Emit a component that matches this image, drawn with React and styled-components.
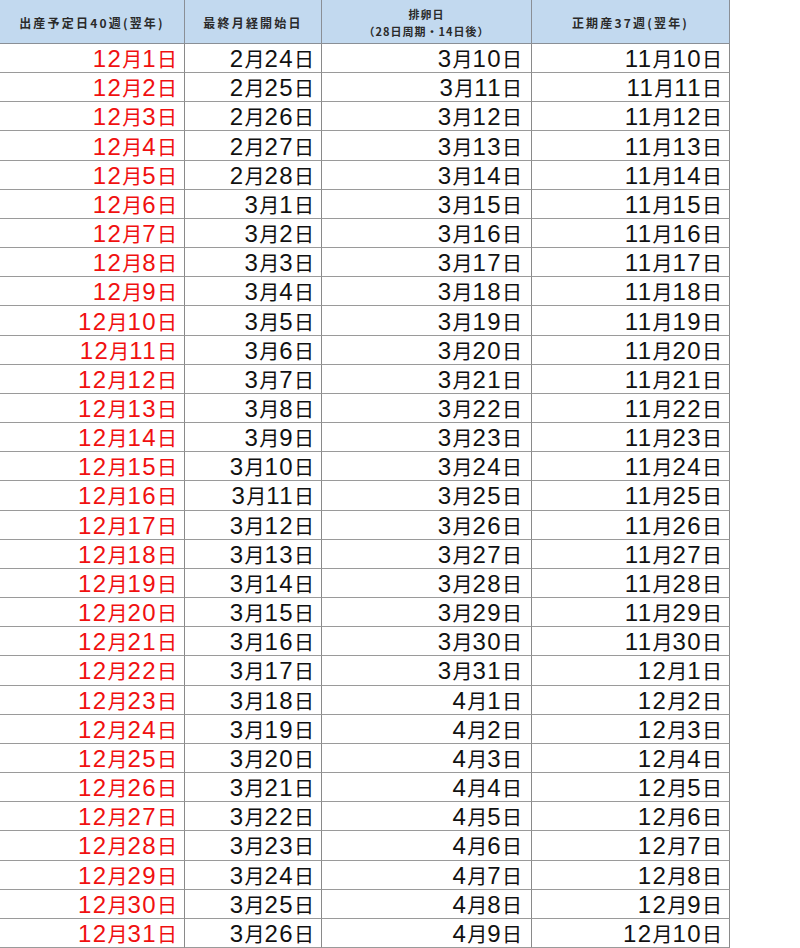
import React from 'react'
import styled, { createGlobalStyle } from 'styled-components'

const GlobalStyle = createGlobalStyle`
  html, body {
    margin: 0;
    padding: 0;
    background: #fff;
  }
  * { box-sizing: border-box; }
`

const DAY = 24 * 60 * 60 * 1000
const base = Date.UTC(2023, 1, 24)

const md = (t) => {
  const d = new Date(t)
  return [d.getUTCMonth() + 1, d.getUTCDate()]
}

const rows = Array.from({ length: 31 }, (_, i) => {
  const lmp = base + i * DAY
  return {
    due: md(lmp + 280 * DAY),
    lmp: md(lmp),
    ovu: md(lmp + 14 * DAY),
    term: md(lmp + 259 * DAY),
  }
})

function DateText({ value }) {
  const [m, d] = value
  return (
    <>
      <Num>{m}</Num>
      <Unit>月</Unit>
      <Num>{d}</Num>
      <Unit>日</Unit>
    </>
  )
}

function App() {
  return (
    <>
      <GlobalStyle />
      <Grid>
        <Head>出産予定日40週(翌年)</Head>
        <Head>最終月経開始日</Head>
        <Head $tight>
          <span>排卵日</span>
          <span>（28日周期・14日後）</span>
        </Head>
        <Head>正期産37週(翌年)</Head>
        {rows.map((r, i) => (
          <React.Fragment key={i}>
            <Cell $red><DateText value={r.due} /></Cell>
            <Cell><DateText value={r.lmp} /></Cell>
            <Cell $pad={9}><DateText value={r.ovu} /></Cell>
            <Cell><DateText value={r.term} /></Cell>
          </React.Fragment>
        ))}
      </Grid>
    </>
  )
}

export default App

const Grid = styled.div`
  display: grid;
  grid-template-columns: 185px 137px 210px 198px;
  grid-template-rows: 44px repeat(31, 1fr);
  width: 730px;
  height: 948px;
`

const Head = styled.div`
  display: flex;
  flex-direction: column;
  align-items: center;
  justify-content: center;
  gap: 2px;
  background: #c2d9ef;
  border-right: 1px solid #8a8f96;
  border-bottom: 1px solid #8a8f96;
  font-family: "Noto Sans CJK JP", sans-serif;
  font-weight: 700;
  font-size: ${p => (p.$tight ? '11px' : '12px')};
  letter-spacing: ${p => (p.$tight ? '1px' : '2.2px')};
  line-height: 1.3;
  color: #2a2a2a;
  padding-top: 2px;
`

const Cell = styled.div`
  display: flex;
  align-items: center;
  justify-content: flex-end;
  padding-right: ${p => p.$pad || 7}px;
  padding-top: 2px;
  border-right: 1px solid #8a8a8a;
  border-bottom: 1px solid #9a9a9a;
  color: ${p => (p.$red ? '#f01010' : '#111')};
  white-space: nowrap;
  line-height: 1;
`

const Num = styled.span`
  font-family: "Liberation Sans", Arial, sans-serif;
  font-size: 24px;
  letter-spacing: 1.4px;
`

const Unit = styled.span`
  font-family: "Noto Sans CJK JP", sans-serif;
  font-size: 20px;
`
